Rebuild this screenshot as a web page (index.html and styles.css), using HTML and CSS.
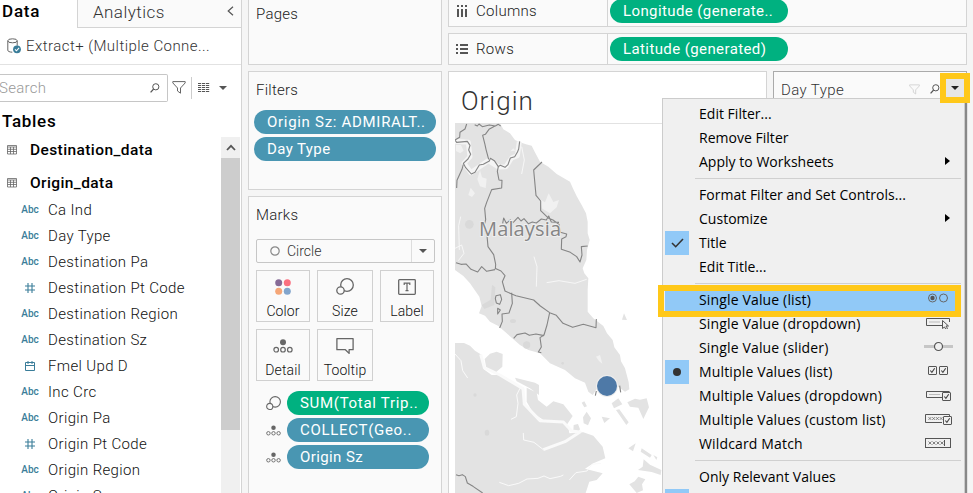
FILE: index.html
```
<!DOCTYPE html>
<html lang="en">
<head>
<meta charset="utf-8">
<title>Worksheet</title>
<link rel="stylesheet" href="styles.css">
</head>
<body>
<svg width="0" height="0" class="defs">
  <defs>
    <symbol id="table" viewBox="0 0 10 10"><path d="M.5 .5h9v8.500h-9zM.5 2h9M.5 4.300h9M.5 6.500h9M3.500 2v7M6.500 2v7" fill="none" stroke="#666" stroke-width=".8"/></symbol>
    <symbol id="hash" viewBox="0 0 10 10"><path d="M3 0v10M7 0v10M0 3h10M0 7h10" fill="none" stroke="#3a7d99" stroke-width="1.100"/></symbol>
    <symbol id="cal" viewBox="0 0 10 10"><path d="M.5 1.500h9v8h-9zM.5 4.500h9M3 0v3M7 0v3" fill="none" stroke="#3a7d99"/></symbol>
    <symbol id="lens" viewBox="0 0 10 10"><circle cx="5.800" cy="3.800" r="3.100" fill="none" stroke="#555" stroke-width="1"/><path d="M3.600 6L.6 9.300" stroke="#555" stroke-width="1.200"/></symbol>
    <symbol id="funnel" viewBox="0 0 14 13"><path d="M.8 .6h12.400v1.300L8.500 7v5.200L5.500 10V7L.8 1.900z" fill="none" stroke="currentColor" stroke-width="1"/></symbol>
    <symbol id="size" viewBox="0 0 18 18"><circle cx="11" cy="7" r="6.300" fill="#fafafa" stroke="#666" stroke-width="1.300"/><circle cx="4.500" cy="12.500" r="3.700" fill="#fafafa" stroke="#666" stroke-width="1.300"/></symbol>
    <symbol id="detail" viewBox="0 0 20 14"><circle cx="10" cy="3.200" r="3" fill="#666"/><g fill="none" stroke="#666" stroke-width="1.200"><circle cx="3.200" cy="10.700" r="2.300"/><circle cx="10" cy="10.700" r="2.300"/><circle cx="16.800" cy="10.700" r="2.300"/></g></symbol>
    <symbol id="check" viewBox="0 0 9 9"><rect x=".5" y=".5" width="8" height="8" rx=".5" fill="#f0f0f0" stroke="#555"/><path d="M2.300 4.500l1.600 1.900L6.700 2.200" fill="none" stroke="#444" stroke-width="1.100"/></symbol>
    <symbol id="xs" viewBox="0 0 16 4"><path d="M.5 .5l3 3m0-3l-3 3M4.500 .5l3 3m0-3l-3 3M8.500 .5l3 3m0-3l-3 3M12.500 .5l3 3m0-3l-3 3" stroke="#666" stroke-width=".8"/></symbol>
  </defs>
</svg>
<div class="app">
  <aside class="data-pane">
    <div class="tabs">
      <div class="tab active">Data</div>
      <div class="tab"><span>Analytics</span><svg width="7" height="10"><path d="M6 .7L1.200 5 6 9.300" fill="none" stroke="#555" stroke-width="1.200"/></svg></div>
    </div>
    <div class="source">
      <svg width="15" height="16" viewBox="0 0 15 16"><path d="M.8 2.800v9.500c0 1 1.700 1.800 4.500 1.900M10.200 2.800v5" fill="none" stroke="#666"/><ellipse cx="5.500" cy="2.800" rx="4.700" ry="2" fill="none" stroke="#666"/><circle cx="10" cy="11.300" r="3.900" fill="#3a7d99"/><path d="M8 11.300l1.500 1.500 2.600-3" fill="none" stroke="#fff" stroke-width="1.100"/></svg>
      <span>Extract+ (Multiple Conne...</span>
    </div>
    <div class="search-row">
      <div class="search"><span>Search</span><svg width="10" height="10"><use href="#lens"/></svg></div>
      <svg class="funnel" width="14" height="13"><use href="#funnel"/></svg>
      <i class="divider"></i>
      <svg class="list" width="12" height="10"><path d="M0 .5h12M0 2.500h12M0 4.500h12M0 6.500h12M0 8.500h12" stroke="#555" stroke-dasharray="3.200 .8" stroke-width="1"/></svg>
      <i class="caret"></i>
    </div>
    <h2>Tables</h2>
    <div class="fields-area">
      <div class="fields">
        <div class="table"><svg width="10" height="10"><use href="#table"/></svg><b>Destination_data</b></div>
        <div class="table"><svg width="10" height="10"><use href="#table"/></svg><b>Origin_data</b></div>
        <div class="field"><i>Abc</i><span>Ca Ind</span></div>
        <div class="field"><i>Abc</i><span>Day Type</span></div>
        <div class="field"><i>Abc</i><span>Destination Pa</span></div>
        <div class="field"><i><svg width="10" height="10"><use href="#hash"/></svg></i><span>Destination Pt Code</span></div>
        <div class="field"><i>Abc</i><span>Destination Region</span></div>
        <div class="field"><i>Abc</i><span>Destination Sz</span></div>
        <div class="field"><i><svg width="10" height="10"><use href="#cal"/></svg></i><span>Fmel Upd D</span></div>
        <div class="field"><i>Abc</i><span>Inc Crc</span></div>
        <div class="field"><i>Abc</i><span>Origin Pa</span></div>
        <div class="field"><i><svg width="10" height="10"><use href="#hash"/></svg></i><span>Origin Pt Code</span></div>
        <div class="field"><i>Abc</i><span>Origin Region</span></div>
        <div class="field"><i>Abc</i><span>Origin Sz</span></div>
      </div>
      <div class="scrollbar"><div class="up"><svg width="10" height="8"><path d="M1 6l4-4.200L9 6" fill="none" stroke="#555" stroke-width="1.800"/></svg></div><div class="thumb"></div></div>
    </div>
  </aside>

  <section class="shelves">
    <div class="card pages"><h3>Pages</h3></div>
    <div class="card filters"><h3>Filters</h3>
      <div class="pill blue wide">Origin Sz: ADMIRALT..</div>
      <div class="pill blue">Day Type</div>
    </div>
    <div class="card marks"><h3>Marks</h3>
      <div class="select"><svg width="10" height="10"><circle cx="5" cy="5" r="4.200" fill="none" stroke="#888" stroke-width="1.200"/></svg><span>Circle</span><em><i class="caret"></i></em></div>
      <div class="buttons">
        <div class="btn"><svg width="18" height="18"><circle cx="4.700" cy="4.700" r="3.500" fill="#866a96"/><circle cx="13.300" cy="4.700" r="3.500" fill="#fa7080"/><circle cx="4.700" cy="13.300" r="3.500" fill="#f5a677"/><circle cx="13.300" cy="13.300" r="3.500" fill="#82a5cc"/></svg>Color</div>
        <div class="btn"><svg width="18" height="18"><use href="#size"/></svg>Size</div>
        <div class="btn"><svg width="18" height="18" viewBox="0 0 18 18"><rect x=".7" y="1.700" width="16.600" height="14.600" rx=".8" fill="none" stroke="#666" stroke-width="1.300"/><path d="M6.200 7V5.200h5.600V7M9 5.200v7.500M7.500 12.700h3" fill="none" stroke="#666" stroke-width="1.200"/></svg>Label</div>
        <div class="btn"><svg width="20" height="18" viewBox="0 -2 20 18"><use href="#detail" width="20" height="14"/></svg>Detail</div>
        <div class="btn"><svg width="18" height="18"><path d="M.9 1.700h16.200v11h-4v3.700l-3.700-3.700H.9z" fill="none" stroke="#666" stroke-width="1.300" stroke-linejoin="round"/></svg>Tooltip</div>
      </div>
      <div class="mark"><svg width="15" height="15"><use href="#size"/></svg><div class="pill green wide">SUM(Total Trip..</div></div>
      <div class="mark"><svg width="15" height="11"><use href="#detail"/></svg><div class="pill blue wide">COLLECT(Geo..</div></div>
      <div class="mark"><svg width="15" height="11"><use href="#detail"/></svg><div class="pill blue">Origin Sz</div></div>
    </div>
  </section>

  <main class="workspace">
    <div class="shelf columns"><div class="shelf-name"><svg width="12" height="12"><path d="M2 0v2M6 0v2M10 0v2M2 4v8M6 4v8M10 4v8" stroke="#555" stroke-width="2"/></svg>Columns</div><div class="pill green">Longitude (generate..</div></div>
    <div class="shelf rows"><div class="shelf-name"><svg width="12" height="12"><path d="M0 2h2M0 6h2M0 10h2M4 2h8M4 6h8M4 10h8" stroke="#555" stroke-width="1.800"/></svg>Rows</div><div class="pill green">Latitude (generated)</div></div>
    <div class="stage">
      <div class="viz">
        <h1>Origin</h1>
        <svg class="map" width="305" height="370" viewBox="455 123 305 370">
          <g transform="translate(440 0) scale(.33333)">
            <g fill="#e3e3e3">
              <path d="M45 370H180L190 388 210 400 225 420 240 427 258 433 275 437 284 455 300 485 325 500 350 522 390 545 400 568 411 590 425 615 438 640 443 665 443 700 449 720 441 750 439 780 428 805 433 820 445 835 443 870 443 935 460 955 490 978 501 1000 518 1020 523 1042 540 1065 543 1084 555 1105 566 1147 568 1168 555 1175 535 1160 470 1167 458 1185 445 1175 435 1148 405 1135 375 1110 330 1090 300 1060 265 1050 240 1035 200 1000 175 978 150 965 135 947 117 940 125 918 118 890 90 850 70 828 45 810Z"/>
              <path d="M45 1029H72L90 1037 105 1052 122 1063 131 1108 155 1125 180 1125 215 1146 249 1170 250 1208 271 1235 300 1262 365 1268 385 1282 388 1300 430 1297 460 1307 488 1340 496 1375 460 1390 435 1406 488 1420 470 1440 448 1445 437 1479H45Z"/>
              <path d="M134 1077L150 1061 170 1055 188 1062 187 1100 165 1119 139 1104ZM225 1133L285 1148 297 1155 297 1185 270 1165 230 1144ZM260 1163L290 1178 294 1200 320 1220 340 1204 370 1213 398 1248 380 1275 315 1263 280 1240 260 1205ZM401 1275L414 1272 420 1288 412 1299 400 1292ZM562 1207L585 1196 600 1199 620 1195 627 1222 610 1257 595 1223 570 1220ZM429 1252L440 1235 453 1255 444 1276 431 1270ZM594 1410L608 1400 611 1378 630 1394 664 1410 662 1425 635 1416ZM568 1453L584 1444 595 1430 616 1438 606 1453 609 1471 590 1479 578 1465ZM546 959L552 940 561 960ZM425 1208l8-4 8 15-8 3zM485 1250l25 5-17 14zM515 1210l20-15 12 18-25 12zM528 1230l10-2 28 39-7 8zM565 1345l22-15-8 24zM605 1345l30 20-5 8-28-18zM640 1365l12 7-3 8z"/>
            </g>
            <g fill="#f1f1f1"><path d="M300 598L315 607 326 580 340 606 357 600 350 622 330 640 305 625ZM112 538l8-28 6 22 14 4-3 28-17-5zM85 585l7-22 13 17-9 11zM48 435h15l8 17-10 8-13-7zM468 1070l12-5 7 26-10-8zM220 445l-9 9 15-2z"/></g>
            <g fill="#d9d9d9"><circle cx="88" cy="673" r="13"/><ellipse cx="141" cy="1298" rx="7" ry="9"/><circle cx="105" cy="1185" r="5"/><ellipse cx="219" cy="963" rx="9" ry="6"/><path d="M125 915l27-16 4-45 10 8-3 53-30 12z"/><circle cx="260" cy="1035" r="11"/><circle cx="368" cy="1090" r="4"/></g>
            <g fill="none" stroke="#f5f5f5" stroke-width="15" stroke-linejoin="round"><path d="M45 424L85 427 90 470 72 490 93 518 145 482 176 501 198 500 215 474 232 467 238 425"/></g>
            <g fill="none" stroke="#fafafa" stroke-width="9" stroke-linejoin="round"><path d="M122 1063L133 1103 180 1125 249 1166 253 1213 300 1262 370 1266 395 1293 420 1296 375 1325 310 1349"/><path d="M310 1349l-28-22-31-7-1-21M240 1165l-10 20 4 25-5 40-16 8M45 1062l18 20 5 30 15 22M178 1447l28 10 30-7 25-13 33-2 18-7 18 8 32-7 8-4M388 1440l20-22 33-5 15-20 27-3" stroke-width="3"/><path d="M282 770l9 30-2 60M320 848l37-6 48 8 35-12M245 440l8 40-8 42M62 650l-6 27 2 73M45 745l20-10 7 25-17 22" stroke-width="2.500"/></g>
            <g fill="none" stroke="#858585" stroke-width="3.300" stroke-linejoin="round">
              <path d="M80 372L75 387 60 397 59 412 45 420 50 427 82 424 90 436 86 450 92 463 84 477 70 490 77 503 94 522 105 517 118 495 130 493 148 483 151 475 163 482 175 500 181 496 195 502 204 494 211 474 224 470 232 457 236 447 239 424"/>
              <path d="M104 374l8 4 5-6 10 8 21-5 18 3 9-5 7 5M165 378l-18 10-11 15-8 3 7 28 3 14 8 30M70 493l-4 15-15 33-1 23M175 500l-3 14 5 26 9 1-1 23-30 5-15 38-6 18 3 34-6 23 10 25 3 33 17 24 6 29-1 15"/>
              <path d="M306 486L281 510 288 586 302 603 302 632 326 655 339 660 357 673 361 697 380 702 378 710 365 717 364 748 391 757 410 770 420 786 426 765 424 740 443 738M188 670l3-16 8 16 12-10 8 8 15-16 9 11 9-7 13 15 12-5 12 3 15-12 15 3 7-12 8 18 23 1"/>
              <path d="M48 788l15 5 15-1 15 16 20 8 12-16 15 14 25-5M165 805l18 8 12 14-8 18 8 28 20 9 13 5 53 13 20 18 28 20 20 8 20 24 29 12 32-9 38 10 1-26M215 878l2 32-10 29-21 3 1 22-8 20M329 938l-8 37-9 30-12 8 4 28-9 15 9 2M312 1007l-24-5-20 4-13-7-24 5-10 11M168 887l13-3 4 14-6 15-10-4-3-13zM173 925l8 5-8 12zM469 1173l-3 14M539 1157l3 20M48 1424l9 3 10-3 9 6 6 19 17 10 29 20"/>
            </g>
            <circle cx="501" cy="1158" r="33" fill="#eee"/><circle cx="501" cy="1158" r="30" fill="#4e79a7"/>
          </g>
          <text x="479" y="236" textLength="82" class="place">Malaysia</text>
        </svg>
      </div>
      <div class="filter-card"><span>Day Type</span><svg class="pale" width="11" height="11"><use href="#funnel"/></svg><svg width="10" height="10"><use href="#lens"/></svg></div>
    </div>
  </main>
</div>

<div class="menu">
  <div class="item">Edit Filter...</div>
  <div class="item">Remove Filter</div>
  <div class="item">Apply to Worksheets<i class="sub"></i></div>
  <hr>
  <div class="item">Format Filter and Set Controls...</div>
  <div class="item">Customize<i class="sub"></i></div>
  <div class="item"><b class="state"><svg width="13" height="10"><path d="M1 5l3.700 3.700L12 1" fill="none" stroke="#333" stroke-width="1.600"/></svg></b>Title</div>
  <div class="item">Edit Title...</div>
  <hr>
  <div class="item value chosen">Single Value (list)<svg width="29" height="12"><circle cx="8.500" cy="5" r="4" fill="none" stroke="#666"/><circle cx="8.500" cy="5" r="2.200" fill="#555"/><circle cx="19.500" cy="5" r="4" fill="none" stroke="#666"/></svg></div>
  <div class="item value">Single Value (dropdown)<svg width="29" height="12"><path d="M18 8.500H2.500v-7h23V5" fill="none" stroke="#555"/><path d="M5 5h11" stroke="#bbb"/><path d="M18.500 3.500v8l2-1.500 1.500 2.500 1.500-1-1.500-2.500h2.500z" fill="#f0f0f0" stroke="#555"/></svg></div>
  <div class="item value">Single Value (slider)<svg width="29" height="12"><path d="M0 5.500h29" stroke="#c6c6c6" stroke-width="3"/><circle cx="14.500" cy="5.500" r="4" fill="#f0f0f0" stroke="#555" stroke-width="1.200"/></svg></div>
  <div class="item value"><b class="state"><i class="dot"></i></b>Multiple Values (list)<svg width="29" height="12"><use href="#check" x="4" y="1" width="9" height="9"/><use href="#check" x="15" y="1" width="9" height="9"/></svg></div>
  <div class="item value">Multiple Values (dropdown)<svg width="29" height="12"><path d="M18 8.500H2.500v-6h23" fill="none" stroke="#555"/><path d="M5 5.500h11" stroke="#bbb"/><use href="#check" x="18" y="3" width="9" height="9"/></svg></div>
  <div class="item value">Multiple Values (custom list)<svg width="29" height="12"><path d="M18 9.500H1.500v-8h24v3" fill="none" stroke="#555"/><use href="#xs" x="4" y="3.500" width="15" height="4"/><use href="#check" x="19" y="3" width="9" height="9"/></svg></div>
  <div class="item value">Wildcard Match<svg width="29" height="12"><rect x="1.500" y="1.500" width="25" height="9" fill="none" stroke="#555"/><use href="#xs" x="4" y="4" width="16" height="4"/><path d="M20.500 3v6" stroke="#555"/></svg></div>
  <hr>
  <div class="item">Only Relevant Values</div>
  <div class="item last"><b class="state"></b></div>
</div>
<div class="callout arrow"><i class="caret"></i></div>
<div class="callout choice"></div>
</body>
</html>
```
FILE: styles.css
```
* { box-sizing: border-box; }
html { overflow: hidden; }
body {
  margin: 0;
  width: 973px;
  height: 493px;
  overflow: hidden;
  position: relative;
  background: #f5f5f5;
  color: #111;
  font: 300 15px/20px Roboto, "Liberation Sans", sans-serif;
}
svg { display: block; flex: none; }
.defs { position: absolute; }
h1, h2, h3 { margin: 0; }
i, em { font-style: normal; }
.app {
  display: grid;
  grid-template-columns: 242px 194px 519px;
  column-gap: 6px;
  height: 493px;
  overflow: hidden;
}
.caret {
  border: 4px solid transparent;
  border-top: 4px solid #555;
  border-bottom: 0;
}

.data-pane {
  background: #fff;
  border-right: 1px solid #d4d4d4;
  height: 493px;
  overflow: hidden;
}
.tabs { display: flex; height: 28px; }
.tab {
  flex: 1;
  display: flex;
  justify-content: space-between;
  border: solid #d4d4d4;
  border-width: 0 0 1px 1px;
  background: #fafafa;
  padding: 2px 7px 0 15px;
  font-size: 17px;
  letter-spacing: .45px;
  color: #333;
}
.tab svg { margin-top: 4px; }
.tab.active {
  flex: 0 0 77px;
  padding: 1px 0 0 2px;
  border: 0;
  background: #fff;
  color: #000;
  font-weight: 500;
  font-size: 17px;
  letter-spacing: .8px;
}
.source {
  display: flex;
  align-items: center;
  gap: 4px;
  height: 37px;
  padding-left: 7px;
  border-bottom: 1px solid #e2e2e2;
  color: #333;
  letter-spacing: .45px;
}
.search-row { display: flex; align-items: center; height: 27px; margin-top: 9px; }
.search {
  display: flex;
  align-items: center;
  justify-content: space-between;
  width: 168px;
  height: 28px;
  padding: 0 7px 0 0;
  border: 1px solid #c6c6c6;
  border-left: 0;
  border-radius: 0 2px 2px 0;
  color: #999;
}
.search span { margin-left: -1px; letter-spacing: .3px; }
.funnel { color: #666; margin-left: 4px; }
.divider { width: 1px; height: 22px; background: #ccc; margin-left: 5px; }
.list { margin-left: 6px; }
.search-row .caret { margin-left: 9px; }
.data-pane h2 {
  height: 36px;
  padding: 10px 0 0 2px;
  font-size: 17px;
  font-weight: 500;
  letter-spacing: .7px;
  color: #000;
}
.fields-area { display: flex; height: 356px; }
.fields { flex: 1; }
.table { display: flex; align-items: center; height: 33px; padding-left: 7px; gap: 13px; }
.table:first-child { height: 25px; }
.table b { font-weight: 500; font-size: 15.500px; letter-spacing: .4px; color: #000; }
.table + .table { height: 35px; padding-top: 7px; }
.field { display: flex; align-items: center; height: 26px; padding-left: 21px; }
.field i {
  display: flex;
  justify-content: center;
  width: 18px;
  margin-right: 9px;
  font-size: 10px;
  font-weight: 500;
  color: #3a7d99;
}
.field span { letter-spacing: .35px; }
.scrollbar { width: 20px; background: #f0f0f0; border-right: 1px solid #fff; }
.up { display: flex; align-items: center; justify-content: center; height: 21px; }
.thumb { height: 272px; background: #cdcdcd; }

.shelves { display: flex; flex-direction: column; gap: 6px; height: 493px; }
.card { border: 1px solid #d4d4d4; background: #fafafa; padding: 8px 5px 0; }
.card h3 { height: 20px; padding-left: 2px; font-weight: 300; font-size: 15px; letter-spacing: .25px; color: #222; }
.pages { height: 65px; border-top: 0; padding-top: 4px; }
.filters { height: 119px; }
.filters h3 { margin-bottom: 10px; }
.marks { flex: 1; border-bottom: 0; }
.pill {
  height: 24px;
  margin-bottom: 3px;
  padding: 0 0 0 13px;
  border-radius: 12px;
  color: #fff;
  font-weight: 400;
  font-size: 15px;
  line-height: 25px;
  letter-spacing: .4px;
  white-space: nowrap;
}
.pill.wide { letter-spacing: .7px; }
.blue { background: #4996b2; }
.green { background: #00b180; }
.select {
  display: flex;
  align-items: center;
  height: 24px;
  margin: 14px 1px 7px 2px;
  padding-left: 13px;
  border: 1px solid #c6c6c6;
  border-radius: 2px;
  gap: 7px;
  font-size: 14px;
  color: #333;
}
.select em {
  display: flex;
  align-items: center;
  justify-content: center;
  width: 23px;
  height: 22px;
  margin-left: auto;
  border-left: 1px solid #ddd;
}
.buttons {
  display: grid;
  grid-template-columns: 54px 56px 54px;
  column-gap: 7px;
  row-gap: 7px;
  margin: 0 0 10px 2px;
}
.btn {
  display: flex;
  flex-direction: column;
  align-items: center;
  height: 52px;
  padding-top: 7px;
  gap: 5px;
  border: 1px solid #d0d0d0;
  font-size: 14px;
  letter-spacing: .1px;
}
.mark { display: flex; align-items: center; height: 24px; margin: 0 7px 3px 12px; gap: 6px; }
.mark .pill { flex: 1; margin: 0; }

.shelf { display: flex; border: 1px solid #d4d4d4; background: #fafafa; height: 32px; }
.columns { height: 27px; border-top: 0; margin-bottom: 6px; }
.rows { margin-bottom: 6px; }
.shelf-name {
  display: flex;
  align-items: center;
  gap: 8px;
  width: 159px;
  padding-left: 7px;
  border-right: 1px solid #d4d4d4;
  color: #222;
  letter-spacing: .3px;
}
.columns .shelf-name { padding-bottom: 4px; }
.shelf .pill { width: 178px; margin: 3px 0 0 2px; }
.columns .pill { margin-top: -1px; }
.stage { display: flex; gap: 6px; height: 422px; }
.viz { width: 319px; overflow: hidden; border: 1px solid #d4d4d4; border-bottom: 0; background: #fff; padding-left: 6px; }
.viz h1 {
  height: 52px;
  padding: 15px 0 0 6px;
  border-bottom: 1px solid #e2e2e2;
  font-size: 26px;
  line-height: 28px;
  font-weight: 300;
  letter-spacing: 1px;
  color: #333;
}
.map { margin-top: -1px; }
.place {
  font: 400 20px "Open Sans", sans-serif;
  fill: #858585;
  stroke: #eee;
  stroke-width: 2px;
  paint-order: stroke;
}
.filter-card {
  display: flex;
  width: 194px;
  padding: 8px 26px 0 7px;
  border: 1px solid #aaa;
  background: #fafafa;
  color: #333;
  letter-spacing: .4px;
}
.filter-card span { flex: 1; }
.filter-card svg { margin-top: 4px; }
.filter-card .pale { color: #ccc; margin-right: 10px; }

.menu {
  position: absolute;
  left: 662px;
  top: 98px;
  width: 303px;
  height: 395px;
  overflow: hidden;
  padding: 3px 3px 0 2px;
  border: 1px solid #ccc;
  border-bottom: 0;
  background: #f0f0f0;
  box-shadow: 2px 5px 1px #888;
  font: 400 14px/24px "Open Sans", "Noto Sans", sans-serif;
  letter-spacing: .02px;
  color: #000;
}
.item { position: relative; display: flex; align-items: center; height: 24px; padding-left: 34px; white-space: nowrap; }
.value { letter-spacing: .15px; }
.last { height: 5px; overflow: hidden; }
.item > svg { margin: 0 8px 2px auto; }
.sub { margin: 0 11px 2px auto; border: 4px solid transparent; border-left: 5px solid #000; border-right: 0; }
.menu hr { height: 1px; margin: 4px 0 4px 30px; border: 0; background: #d0d0d0; }
.state {
  position: absolute;
  left: 0;
  top: 0;
  display: flex;
  align-items: center;
  justify-content: center;
  width: 24px;
  height: 24px;
  background: #91c9f7;
}
.dot { width: 8px; height: 8px; border-radius: 50%; background: #333; }
.chosen { background: #91c9f7; }
.callout { position: absolute; border: 6px solid #ffc819; }
.callout.arrow {
  left: 940px;
  top: 73px;
  width: 30px;
  height: 30px;
  display: flex;
  align-items: center;
  justify-content: center;
  background: #e6e6e6;
}
.arrow .caret { border-top-color: #222; }
.choice { left: 658px; top: 285px; width: 303px; height: 32px; }
```
